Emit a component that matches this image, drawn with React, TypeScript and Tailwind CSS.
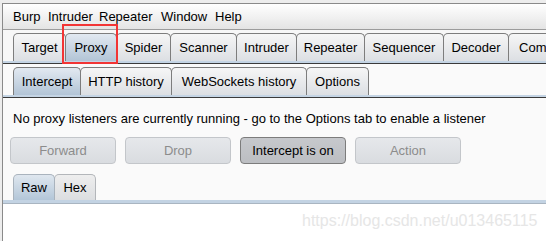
import clsx from 'clsx'

type Tab = { label: string; w: number }

const topTabs: Tab[] = [
  { label: 'Target', w: 53 },
  { label: 'Proxy', w: 52 },
  { label: 'Spider', w: 55 },
  { label: 'Scanner', w: 67 },
  { label: 'Intruder', w: 61 },
  { label: 'Repeater', w: 69 },
  { label: 'Sequencer', w: 80 },
  { label: 'Decoder', w: 66 },
  { label: 'Comparer', w: 80 },
]

const subTabs: Tab[] = [
  { label: 'Intercept', w: 68 },
  { label: 'HTTP history', w: 92 },
  { label: 'WebSockets history', w: 136 },
  { label: 'Options', w: 63 },
]

const menu = [
  { label: 'Burp', w: 35 },
  { label: 'Intruder', w: 51 },
  { label: 'Repeater', w: 62 },
  { label: 'Window', w: 54 },
  { label: 'Help', w: 40 },
]

function TabStrip({ tabs, active, h }: { tabs: Tab[]; active: number; h: string }) {
  return (
    <div className={clsx('flex items-end pl-[10px]', h)}>
      {tabs.map((t, i) => (
        <div
          key={t.label}
          style={{ width: t.w }}
          className={clsx(
            'h-full shrink-0 flex items-center justify-center whitespace-nowrap rounded-t-[5px] border-l border-t border-r border-[#7d7d7d]',
            i > 0 && '-ml-px',
            i === active
              ? 'relative z-10 bg-gradient-to-b from-[#e2e9f1] to-[#b2c4d6]'
              : 'bg-gradient-to-b from-[#f6f6f6] to-[#dcdfe3]'
          )}
        >
          {t.label}
        </div>
      ))}
    </div>
  )
}

function Band() {
  return (
    <div>
      <div className="h-[2px] bg-[#c4d4e4]" />
      <div className="h-px bg-[#3a3a3a]" />
    </div>
  )
}

function Btn({ label, on }: { label: string; on?: boolean }) {
  return (
    <div
      className={clsx(
        'w-[106px] h-[27px] rounded-[4px] border flex items-center justify-center',
        on
          ? 'border-[#7c7c7c] bg-gradient-to-b from-[#c6c8cc] to-[#bcbec2] text-black'
          : 'border-[#c3c6ca] bg-gradient-to-b from-[#e6e8eb] to-[#d9dce0] text-[#8c8c8c]'
      )}
    >
      {label}
    </div>
  )
}

export default function App() {
  return (
    <div className="relative w-[546px] h-[241px] overflow-hidden bg-[#ededed] pt-[3px] pl-[2px] font-['Liberation_Sans',Arial,sans-serif] text-[13px] text-black">
      <div className="h-full flex flex-col border-l border-t border-[#8a8a8a] bg-[#f7f7f7]">
        <div className="h-[26px] shrink-0 flex items-center pl-[10px] bg-gradient-to-b from-white to-[#e4e4e4] border-b border-[#9c9c9c]">
          {menu.map(m => (
            <span key={m.label} style={{ width: m.w }} className="shrink-0">{m.label}</span>
          ))}
        </div>

        <div className="mt-[3px]">
          <TabStrip tabs={topTabs} active={1} h="h-[28px]" />
        </div>
        <Band />

        <div className="flex-1 flex flex-col bg-[#fafafa]">
          <div className="mt-[3px]">
            <TabStrip tabs={subTabs} active={0} h="h-[28px]" />
          </div>
          <Band />

          <p className="mt-[13px] pl-[10px] leading-[16px] whitespace-nowrap">
            No proxy listeners are currently running - go to the Options tab to enable a listener
          </p>

          <div className="mt-[10px] pl-[7px] flex gap-[9px]">
            <Btn label="Forward" />
            <Btn label="Drop" />
            <Btn label="Intercept is on" on />
            <Btn label="Action" />
          </div>

          <div className="mt-[10px] h-[26px] pl-[10px] flex items-end">
            <div className="w-[42px] h-full flex items-center justify-center rounded-t-[5px] border-l border-t border-r border-[#a9b3bd] bg-gradient-to-b from-[#dfe7ef] to-[#b3c6d8] relative z-10">
              Raw
            </div>
            <div className="-ml-px w-[42px] h-full flex items-center justify-center rounded-t-[5px] border-l border-t border-r border-[#b3b6ba] bg-gradient-to-b from-[#eeeeee] to-[#dcdee1]">
              Hex
            </div>
          </div>
          <div className="h-[4px] bg-[#c3d3e3] border-b border-[#a9b5c1]" />
          <div className="flex-1 bg-white" />
        </div>
      </div>

      <div className="absolute left-[62px] top-[24px] w-[56px] h-[40px] border-2 border-[#f23535] z-20" />

      <span className="absolute left-[302px] top-[213px] text-[16px] leading-[16px] text-[#e6e6e6] whitespace-nowrap">
        https://blog.csdn.net/u013465115
      </span>
    </div>
  )
}
